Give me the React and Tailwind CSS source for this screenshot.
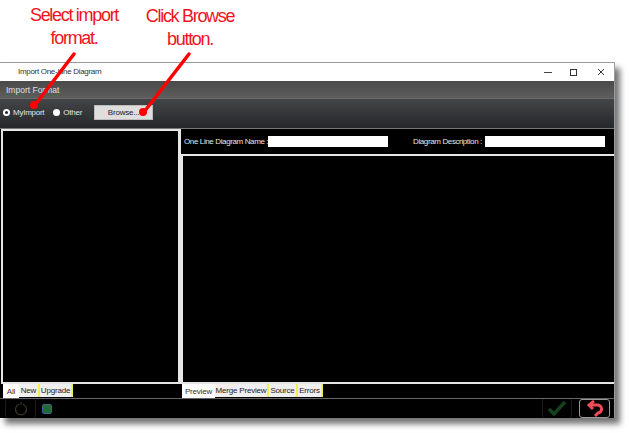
const FONT = "font-['Liberation_Sans',Arial,sans-serif]";

function Tab({ label, active, width }) {
  if (active) {
    return (
      <div className={`${width} h-[14px] bg-white text-center text-[#333] text-[8px] tracking-[-0.2px] leading-[15px]`}>
        {label}
      </div>
    );
  }
  return (
    <div className={`${width} h-[13px] bg-[#efefef] border-r-2 border-[#f2ee50] text-center text-[#222] text-[8px] tracking-[-0.2px] leading-[13px]`}>
      {label}
    </div>
  );
}

function Radio({ label, checked }) {
  return (
    <div className="flex items-center gap-[3px]">
      <div className="w-[7px] h-[7px] rounded-full bg-white flex items-center justify-center">
        {checked && <div className="w-[3px] h-[3px] rounded-full bg-[#222]" />}
      </div>
      <span className="text-[8px] tracking-[-0.25px] text-[#e4e4e4]">{label}</span>
    </div>
  );
}

function Callouts() {
  return (
    <>
      <div className="absolute left-[14px] top-[4px] w-[120px] text-center text-[#f0141e] text-[18px] leading-[23px] tracking-[-1.3px]">
        <div>Select import</div>
        <div>format.</div>
      </div>
      <div className="absolute left-[130px] top-[5px] w-[120px] text-center text-[#f0141e] text-[18px] leading-[23px] tracking-[-1.3px]">
        <div>Click Browse</div>
        <div>button.</div>
      </div>
      <svg className="absolute left-0 top-0" width="630" height="433" viewBox="0 0 630 433">
        <line x1="74" y1="54" x2="35" y2="105" stroke="#f00" strokeWidth="3.5" strokeLinecap="round" />
        <circle cx="34" cy="105" r="4" fill="#f00" />
        <line x1="189" y1="54" x2="144" y2="112" stroke="#f00" strokeWidth="3.5" strokeLinecap="round" />
        <circle cx="143" cy="112" r="4" fill="#f00" />
      </svg>
    </>
  );
}

export default function App() {
  return (
    <div className={`relative w-[630px] h-[433px] bg-white overflow-hidden ${FONT}`}>
      <div className="pt-[62px] pl-0">
        <div className="w-[615px] h-[356px] flex flex-col border-t border-r border-[#9a9a9a] shadow-[5px_6px_6px_rgba(0,0,0,0.55)]">
          {/* title bar */}
          <div className="h-[18px] shrink-0 bg-white flex items-center pl-[18px] pr-[9px]">
            <span className="text-[8px] tracking-[-0.3px] text-[#333] flex-1">Import One-Line Diagram</span>
            <span className="w-[8px] h-px bg-[#444] mr-[18px]" />
            <span className="w-[7px] h-[7px] border border-[#333] mr-[20px]" />
            <svg width="8" height="8" viewBox="0 0 8 8" stroke="#333" strokeWidth="1">
              <path d="M1 1 7 7M7 1 1 7" />
            </svg>
          </div>

          {/* section header */}
          <div className="h-[18px] shrink-0 bg-gradient-to-b from-[#4a4a4a] to-[#5d5d5d] border-b border-[#6a6a6a] flex items-center pl-[6px] pt-[1px] text-[8.5px] text-[#e0e0e0]">
            Import Format
          </div>

          {/* format picker */}
          <div className="h-[29px] shrink-0 bg-gradient-to-b from-[#444546] to-[#25282b] flex items-center pl-[3px] pb-[2px]">
            <Radio label="MyImport" checked />
            <div className="w-[9px]" />
            <Radio label="Other" />
            <div className="ml-[12px] w-[59px] h-[15px] bg-[#dedede] border border-[#bdbdbd] text-[8px] tracking-[-0.2px] text-[#222] text-center leading-[14px]">
              Browse...
            </div>
          </div>

          {/* body */}
          <div className="flex-1 flex bg-black border-t border-[#777] min-h-0">
            <div className="w-[181px] shrink-0 flex flex-col pl-[1px]">
              <div className="flex-1 border-t-2 border-l-2 border-b-2 border-r-[3px] border-[#e6e6e6] bg-black" />
              <div className="h-[14px] flex items-start pl-[2px]">
                <Tab label="All" active width="w-[16px]" />
                <Tab label="New" width="w-[21px]" />
                <Tab label="Upgrade" width="w-[33px]" />
              </div>
            </div>
            <div className="flex-1 flex flex-col">
              <div className="h-[25px] shrink-0 flex items-center pl-[3px] text-[8px] tracking-[-0.38px] text-[#e4e4e4] whitespace-nowrap">
                <span className="w-[84px]">One Line Diagram Name :</span>
                <div className="w-[120px] h-[11px] bg-white" />
                <span className="ml-[25px] w-[72px]">Diagram Description :</span>
                <div className="w-[120px] h-[11px] bg-white" />
              </div>
              <div className="flex-1 border-t-2 border-l-2 border-b-2 border-[#e6e6e6] bg-black" />
              <div className="h-[14px] flex items-start pl-[1px]">
                <Tab label="Preview" active width="w-[33px]" />
                <Tab label="Merge Preview" width="w-[54px]" />
                <Tab label="Source" width="w-[29px]" />
                <Tab label="Errors" width="w-[25px]" />
              </div>
            </div>
          </div>

          {/* status bar */}
          <div className="h-[20px] shrink-0 bg-black border-t border-[#666] flex items-center">
            <div className="ml-[5px] w-[31px] h-[19px] border-x border-[#1d1d1d] rounded-[3px] flex items-center justify-center">
              <svg width="14" height="14" viewBox="0 0 14 14" fill="none" stroke="#3a3520" strokeWidth="1.2">
                <path d="M5 2.2a5.5 5.5 0 1 0 4 0" />
                <path d="M7 0v3" />
              </svg>
            </div>
            <div className="ml-[6px] w-[10px] h-[10px] rounded-[2px] bg-[#1f6a35] border border-[#41608a]" />
            <div className="flex-1" />
            <div className="w-[30px] h-[19px] border-x border-[#1d1d1d] rounded-[3px] flex items-center justify-center mr-[7px]">
              <svg width="20" height="15" viewBox="0 0 20 15" fill="none" stroke="#17401d" strokeWidth="3.5">
                <path d="M2 8l5 5L18 1" />
              </svg>
            </div>
            <div className="w-[31px] h-[19px] border border-[#9a9a9a] rounded-[3px] flex items-center justify-center mr-[4px]">
              <svg width="20" height="17" viewBox="0 0 20 17" fill="none" stroke="#ee4d58" strokeWidth="3">
                <path d="M6 5h6a4 4 0 0 1 1 8l-3 3" />
                <path d="M9 1 4 5l4 4" />
              </svg>
            </div>
          </div>
        </div>
      </div>
      <Callouts />
    </div>
  );
}
